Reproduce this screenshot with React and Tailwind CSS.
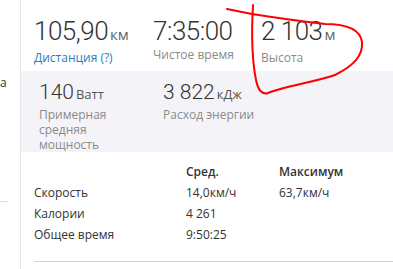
export default function App() {
    const big = [
        { value: "105,90", unit: "км", label: "Дистанция (?)", link: true, w: "w-[119px]" },
        { value: "7:35:00", unit: "", label: "Чистое время", w: "w-[108px]" },
        { value: "2 103", unit: "м", label: "Высота", w: "" },
    ]

    const rows = [
        ["Скорость", "14,0км/ч", "63,7км/ч"],
        ["Калории", "4 261", ""],
        ["Общее время", "9:50:25", ""],
    ]

    return (
        <div className="relative flex w-[393px] h-[269px] overflow-hidden bg-white font-['Open_Sans',sans-serif] text-[#333]">
            {/* side column, mostly cut off */}
            <aside className="w-[20px] shrink-0 flex flex-col">
                <div className="text-[12px] leading-[16px] mt-[75px]">а</div>
                <div className="w-[8px] h-px bg-[#dcdcdc] mt-[110px]"></div>
            </aside>

            <main className="flex-1 flex flex-col border-l border-[#e6e6e6]">
                <section className="flex pl-[13px] pt-[16px] h-[71px]">
                    {big.map((b) => (
                        <div key={b.label} className={b.w}>
                            <div className="flex items-baseline leading-[31px]">
                                <span className="text-[26px] font-light tracking-[-0.5px] font-['Roboto',sans-serif]">{b.value}</span>
                                {b.unit && <span className="ml-[2px] text-[15px] text-[#666] font-['Open_Sans',sans-serif]">{b.unit}</span>}
                            </div>
                            <div className={`text-[12px] leading-[15px] ${b.link ? "text-[#2d7bbf]" : "text-[#8a8a8a]"}`}>
                                {b.label}
                            </div>
                        </div>
                    ))}
                </section>

                <section className="flex bg-[#f4f4f8] h-[81px] pl-[18px] pt-[8px]">
                    <div className="w-[124px]">
                        <div className="flex items-baseline leading-[26px]">
                            <span className="text-[21px] font-light font-['Roboto',sans-serif]">140</span>
                            <span className="ml-[2px] text-[13px] text-[#555]">Ватт</span>
                        </div>
                        <div className="text-[12px] leading-[15px] text-[#8a8a8a] w-[80px]">
                            Примерная средняя мощность
                        </div>
                    </div>
                    <div>
                        <div className="flex items-baseline leading-[26px]">
                            <span className="text-[21px] font-light font-['Roboto',sans-serif]">3 822</span>
                            <span className="ml-[2px] text-[13px] text-[#555]">кДж</span>
                        </div>
                        <div className="text-[12px] leading-[15px] text-[#8a8a8a]">Расход энергии</div>
                    </div>
                </section>

                <section className="pl-[13px] pt-[9px] text-[12px]">
                    <div className="grid grid-cols-[152px_93px_1fr] leading-[21px]">
                        <div></div>
                        <div className="font-semibold">Сред.</div>
                        <div className="font-semibold">Максимум</div>
                        {rows.map((r) => (
                            <>
                                <div key={r[0]}>{r[0]}</div>
                                <div>{r[1]}</div>
                                <div>{r[2]}</div>
                            </>
                        ))}
                    </div>
                    <div className="h-px bg-[#d4d4d4] mt-[16px]"></div>
                </section>
            </main>

            {/* red marker annotation over the page */}
            <svg className="absolute inset-0 pointer-events-none" width="393" height="269" viewBox="0 0 393 269" fill="none">
                <path
                    d="M227 9 L252 14 Q290 20 325 24 C345 24 360 28 362 42 C363 55 355 65 335 75 C315 82 285 86 268 93 C262 95 258 90 256 80 C253 65 251 40 253 5"
                    stroke="#ff0000"
                    strokeWidth="2"
                    strokeLinecap="round"
                    strokeLinejoin="round"
                />
            </svg>
        </div>
    )
}
